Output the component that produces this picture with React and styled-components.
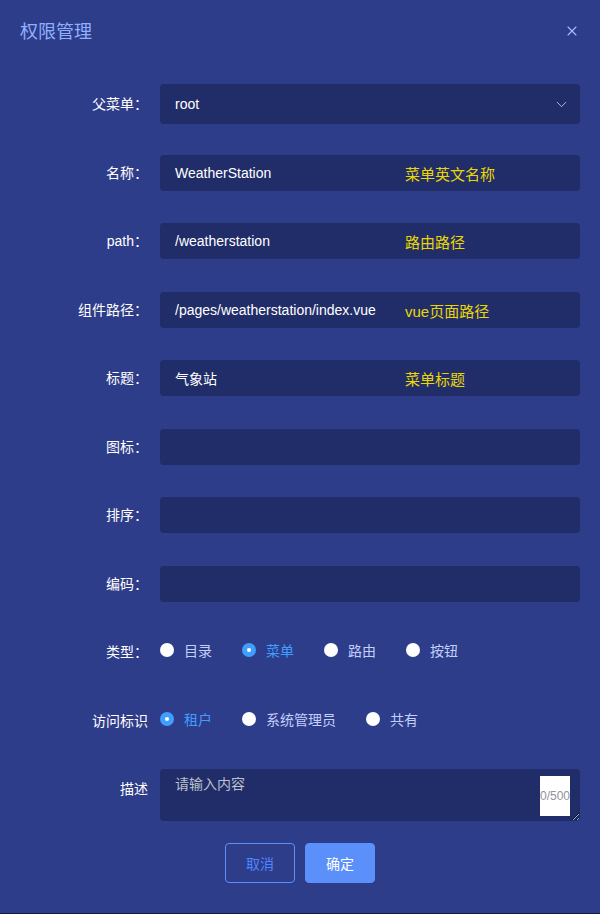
import styled, { createGlobalStyle } from 'styled-components';
import { ChevronDown, X } from 'lucide-react';

const GlobalStyle = createGlobalStyle`
  html, body {
    margin: 0;
    padding: 0;
    background: #161c3c;
    font-family: "Liberation Sans", "Noto Sans CJK SC", sans-serif;
  }
  * {
    box-sizing: border-box;
  }
`;

const textRows = [
  { label: '名称：', value: 'WeatherStation', hint: '菜单英文名称' },
  { label: 'path：', value: '/weatherstation', hint: '路由路径' },
  { label: '组件路径：', value: '/pages/weatherstation/index.vue', hint: 'vue页面路径' },
  { label: '标题：', value: '气象站', hint: '菜单标题' },
  { label: '图标：', value: '' },
  { label: '排序：', value: '' },
  { label: '编码：', value: '' },
];

const typeOptions = ['目录', '菜单', '路由', '按钮'];
const accessOptions = ['租户', '系统管理员', '共有'];

function RadioGroup({ options, checked }) {
  return (
    <Radios>
      {options.map((opt) => (
        <RadioItem key={opt} $checked={opt === checked}>
          <RadioDot $checked={opt === checked} />
          <span>{opt}</span>
        </RadioItem>
      ))}
    </Radios>
  );
}

export default function App() {
  return (
    <>
      <GlobalStyle />
      <Dialog>
        <Header>
          <Title>权限管理</Title>
          <CloseBtn>
            <X size={16} strokeWidth={1.6} />
          </CloseBtn>
        </Header>

        <Form>
          <FormItem>
            <Label>父菜单：</Label>
            <SelectBox>
              <span>root</span>
              <ChevronDown size={17} strokeWidth={1.4} />
            </SelectBox>
          </FormItem>

          {textRows.map((row) => (
            <FormItem key={row.label}>
              <Label>{row.label}</Label>
              <InputWrap>
                <Input defaultValue={row.value} readOnly />
                {row.hint && <Hint>{row.hint}</Hint>}
              </InputWrap>
            </FormItem>
          ))}

          <FormItem>
            <Label>类型：</Label>
            <RadioGroup options={typeOptions} checked="菜单" />
          </FormItem>

          <FormItem>
            <Label>访问标识</Label>
            <RadioGroup options={accessOptions} checked="租户" />
          </FormItem>

          <FormItem $top>
            <Label>描述</Label>
            <TextareaWrap>
              <Textarea placeholder="请输入内容" maxLength={500} />
              <Count>0/500</Count>
            </TextareaWrap>
          </FormItem>
        </Form>

        <Footer>
          <Button>取消</Button>
          <Button $primary>确定</Button>
        </Footer>
      </Dialog>
    </>
  );
}

const Dialog = styled.div`
  width: 600px;
  height: 913px;
  background: #2e3d89;
`;

// Header
const Header = styled.div`
  position: relative;
  padding: 20px 20px 10px;
`;
const Title = styled.div`
  font-size: 18px;
  line-height: 24px;
  color: #8fb0ff;
`;
const CloseBtn = styled.div`
  position: absolute;
  top: 23px;
  right: 20px;
  display: flex;
  color: #a3c0ff;
`;

// Form
const Form = styled.div`
  display: flex;
  flex-direction: column;
  gap: 28.5px;
  padding: 30px 20px 0;
`;
const FormItem = styled.div`
  display: flex;
  align-items: ${(p) => (p.$top ? 'flex-start' : 'center')};
  min-height: 40px;
`;
const Label = styled.label`
  width: 140px;
  flex-shrink: 0;
  padding-right: 12px;
  font-size: 14px;
  line-height: 40px;
  text-align: right;
  color: #ffffff;
`;
const SelectBox = styled.div`
  flex: 1;
  display: flex;
  align-items: center;
  justify-content: space-between;
  height: 40px;
  padding: 0 10px 0 15px;
  border-radius: 4px;
  background: #212d69;
  color: #ffffff;
  font-size: 14px;

  svg {
    color: #b6bccb;
  }
`;
const InputWrap = styled.div`
  position: relative;
  flex: 1;
`;
const Input = styled.input`
  display: block;
  width: 100%;
  height: 36px;
  padding: 0 15px;
  border: none;
  outline: none;
  border-radius: 4px;
  background: #212d69;
  color: #ffffff;
  font-family: "Liberation Sans", "Noto Sans CJK SC", sans-serif;
  font-size: 14px;
`;
const Hint = styled.span`
  position: absolute;
  top: 50%;
  left: 245px;
  transform: translateY(-50%);
  font-size: 15px;
  color: #ead700;
  pointer-events: none;
`;

// Radios
const Radios = styled.div`
  display: flex;
  align-items: center;
  padding-bottom: 4px;
`;
const RadioItem = styled.div`
  display: flex;
  align-items: center;
  gap: 10px;
  margin-right: 30px;
  font-size: 14px;
  color: ${(p) => (p.$checked ? '#409eff' : '#c3cffc')};
`;
const RadioDot = styled.span`
  position: relative;
  width: 14px;
  height: 14px;
  border-radius: 50%;
  background: ${(p) => (p.$checked ? '#409eff' : '#ffffff')};

  &::after {
    content: '';
    display: ${(p) => (p.$checked ? 'block' : 'none')};
    position: absolute;
    top: 5px;
    left: 5px;
    width: 4px;
    height: 4px;
    border-radius: 50%;
    background: #ffffff;
  }
`;

// Textarea
const TextareaWrap = styled.div`
  position: relative;
  flex: 1;
`;
const Textarea = styled.textarea`
  display: block;
  width: 100%;
  height: 52px;
  padding: 5px 15px;
  border: none;
  outline: none;
  border-radius: 4px;
  background: #212d69;
  color: #ffffff;
  font-family: "Liberation Sans", "Noto Sans CJK SC", sans-serif;
  font-size: 14px;
  line-height: 1.5;
  resize: vertical;

  &::placeholder {
    color: #bcc0cc;
  }
`;
const Count = styled.span`
  position: absolute;
  right: 10px;
  bottom: 5px;
  display: flex;
  align-items: center;
  justify-content: center;
  width: 30px;
  height: 40px;
  overflow: visible;
  background: #ffffff;
  color: #909399;
  font-size: 12px;
  white-space: nowrap;
`;

// Footer
const Footer = styled.div`
  display: flex;
  justify-content: center;
  gap: 10px;
  padding: 22px 20px 30px;
`;
const Button = styled.button`
  width: 70px;
  height: 40px;
  border-radius: 4px;
  border: 1px solid #5b8ffa;
  background: ${(p) => (p.$primary ? '#5b8ffa' : 'transparent')};
  color: ${(p) => (p.$primary ? '#ffffff' : '#4f86ff')};
  font-family: "Liberation Sans", "Noto Sans CJK SC", sans-serif;
  font-size: 14px;
  cursor: pointer;
`;
